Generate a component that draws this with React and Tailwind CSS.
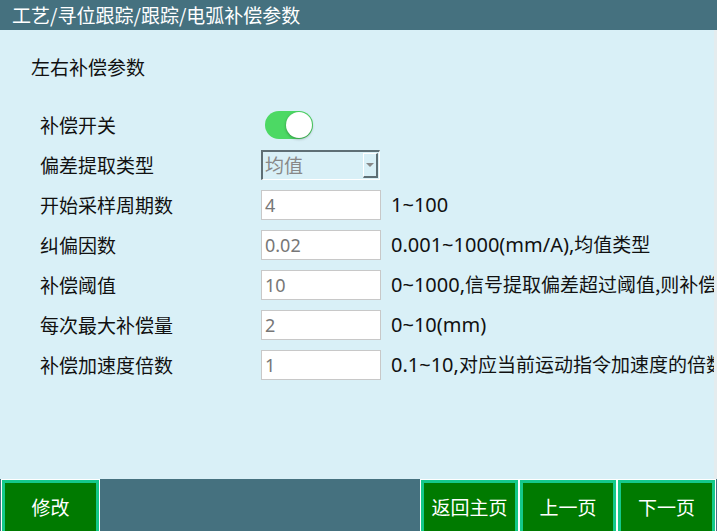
import React from "react";

const CJK = { fontFamily: '"Noto Sans CJK SC", "Noto Sans", sans-serif' };
const LAT = { fontFamily: '"Noto Sans", "Noto Sans CJK SC", sans-serif' };

function Input({ value }) {
  return (
    <div className="w-[120px] h-[30px] bg-white border border-[#c8c8c8] flex items-center pl-[3px] text-[18px] text-[#777]" style={LAT}>
      {value}
    </div>
  );
}

function Row({ label, children, hint }) {
  return (
    <div className="flex items-center h-[40px]">
      <div className="w-[261px] shrink-0 pl-[40px] text-[19px] text-[#111] whitespace-nowrap" style={CJK}>{label}</div>
      <div className="w-[130px] shrink-0 flex items-center">{children}</div>
      {hint && (
        <div className="text-[20px] text-[#111] whitespace-nowrap" style={LAT}>{hint}</div>
      )}
    </div>
  );
}

function Btn({ label, w = "w-[99px]" }) {
  return (
    <div className={"h-full border-t border-l border-r border-white shrink-0 " + w}>
      <div className="h-full border-t-[3px] border-x-[3px] border-[#14c98a] bg-[#007a00] flex items-center justify-center text-white text-[19px]" style={CJK}>
        {label}
      </div>
    </div>
  );
}

const Z = ({ children }) => <span className="text-[19px]" style={CJK}>{children}</span>;

export default function App() {
  return (
    <div className="w-[717px] h-[531px] flex flex-col bg-[#d9f0f7] overflow-hidden">
      <div className="h-[30px] bg-[#45717f] text-white text-[19px] pl-[12px] flex items-center shrink-0" style={CJK}>
        工艺/寻位跟踪/跟踪/电弧补偿参数
      </div>
      <div className="flex-1 flex min-h-0">
        <div className="flex-1 flex flex-col overflow-hidden">
          <div className="pl-[31px] pt-[23px] h-[75px] shrink-0 text-[19px] text-[#111]" style={CJK}>左右补偿参数</div>
          <div className="flex flex-col">
            <Row label="补偿开关">
              <div className="ml-[4px] w-[48px] h-[28px] rounded-full bg-[#4cd964] relative">
                <div className="absolute right-[1px] top-[1px] w-[26px] h-[26px] rounded-full bg-white shadow-[0_1px_3px_rgba(0,0,0,0.35)]" />
              </div>
            </Row>
            <Row label="偏差提取类型">
              <div className="w-[119px] h-[30px] border-t-2 border-l-2 border-[#5f6f75] border-b border-r border-b-white border-r-white flex items-center relative">
                <span className="pl-[2px] text-[19px] text-[#888]" style={CJK}>均值</span>
                <div className="absolute right-[1px] top-[1px] w-[15px] h-[25px] border-b-2 border-r-2 border-[#5f6f75] border-t border-l border-t-white border-l-white flex items-center justify-center">
                  <div className="w-0 h-0 border-l-[4px] border-r-[4px] border-t-[4px] border-l-transparent border-r-transparent border-t-[#888]" />
                </div>
              </div>
            </Row>
            <Row label="开始采样周期数" hint="1~100"><Input value="4" /></Row>
            <Row label="纠偏因数" hint={<span>0.001~1000(mm/A),<Z>均值类型</Z></span>}><Input value="0.02" /></Row>
            <Row label="补偿阈值" hint={<span>0~1000,<Z>信号提取偏差超过阈值,则补偿</Z></span>}><Input value="10" /></Row>
            <Row label="每次最大补偿量" hint="0~10(mm)"><Input value="2" /></Row>
            <Row label="补偿加速度倍数" hint={<span>0.1~10,<Z>对应当前运动指令加速度的倍数</Z></span>}><Input value="1" /></Row>
          </div>
        </div>
        <div className="w-[3px] bg-[#e4ecee] shrink-0" />
      </div>
      <div className="h-[52px] bg-[#45717f] flex shrink-0 pl-[1px]">
        <Btn label="修改" />
        <div className="flex-1" />
        <Btn label="返回主页" />
        <Btn label="上一页" w="w-[98px]" />
        <Btn label="下一页" />
        <div className="w-[1px]" />
      </div>
    </div>
  );
}
